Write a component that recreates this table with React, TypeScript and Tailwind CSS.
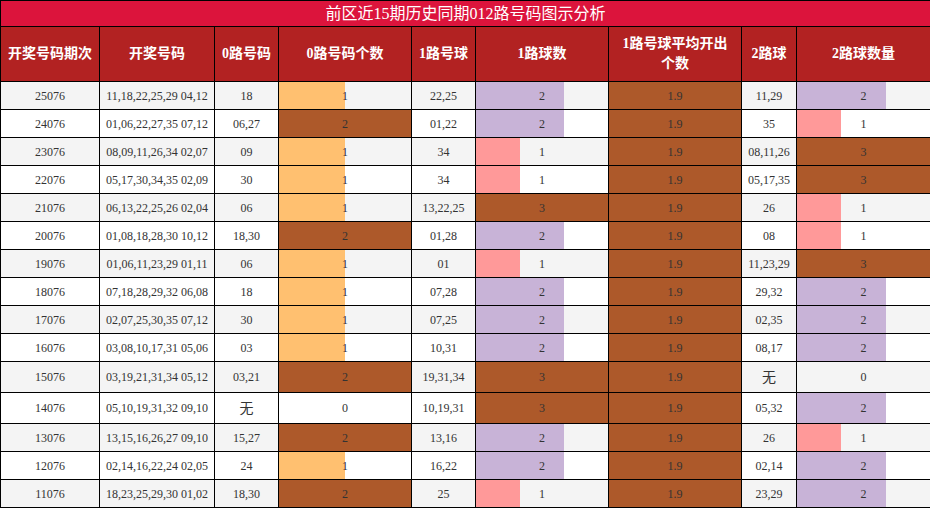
import React from 'react'

type Row = {
  issue: string
  numbers: string
  zero: string
  zeroCount: number
  one: string
  oneCount: number
  two: string
  twoCount: number
  tall?: boolean
}

const rows: Row[] = [
  { issue: '25076', numbers: '11,18,22,25,29 04,12', zero: '18', zeroCount: 1, one: '22,25', oneCount: 2, two: '11,29', twoCount: 2 },
  { issue: '24076', numbers: '01,06,22,27,35 07,12', zero: '06,27', zeroCount: 2, one: '01,22', oneCount: 2, two: '35', twoCount: 1 },
  { issue: '23076', numbers: '08,09,11,26,34 02,07', zero: '09', zeroCount: 1, one: '34', oneCount: 1, two: '08,11,26', twoCount: 3 },
  { issue: '22076', numbers: '05,17,30,34,35 02,09', zero: '30', zeroCount: 1, one: '34', oneCount: 1, two: '05,17,35', twoCount: 3 },
  { issue: '21076', numbers: '06,13,22,25,26 02,04', zero: '06', zeroCount: 1, one: '13,22,25', oneCount: 3, two: '26', twoCount: 1 },
  { issue: '20076', numbers: '01,08,18,28,30 10,12', zero: '18,30', zeroCount: 2, one: '01,28', oneCount: 2, two: '08', twoCount: 1 },
  { issue: '19076', numbers: '01,06,11,23,29 01,11', zero: '06', zeroCount: 1, one: '01', oneCount: 1, two: '11,23,29', twoCount: 3 },
  { issue: '18076', numbers: '07,18,28,29,32 06,08', zero: '18', zeroCount: 1, one: '07,28', oneCount: 2, two: '29,32', twoCount: 2 },
  { issue: '17076', numbers: '02,07,25,30,35 07,12', zero: '30', zeroCount: 1, one: '07,25', oneCount: 2, two: '02,35', twoCount: 2 },
  { issue: '16076', numbers: '03,08,10,17,31 05,06', zero: '03', zeroCount: 1, one: '10,31', oneCount: 2, two: '08,17', twoCount: 2 },
  { issue: '15076', numbers: '03,19,21,31,34 05,12', zero: '03,21', zeroCount: 2, one: '19,31,34', oneCount: 3, two: '无', twoCount: 0, tall: true },
  { issue: '14076', numbers: '05,10,19,31,32 09,10', zero: '无', zeroCount: 0, one: '10,19,31', oneCount: 3, two: '05,32', twoCount: 2, tall: true },
  { issue: '13076', numbers: '13,15,16,26,27 09,10', zero: '15,27', zeroCount: 2, one: '13,16', oneCount: 2, two: '26', twoCount: 1 },
  { issue: '12076', numbers: '02,14,16,22,24 02,05', zero: '24', zeroCount: 1, one: '16,22', oneCount: 2, two: '02,14', twoCount: 2 },
  { issue: '11076', numbers: '18,23,25,29,30 01,02', zero: '18,30', zeroCount: 2, one: '25', oneCount: 1, two: '23,29', twoCount: 2 },
]

const zeroColors: Record<number, string> = {
  0: 'bg-transparent',
  1: 'bg-[#ffc070]',
  2: 'bg-[#ad592a]',
}

const triColors: Record<number, string> = {
  0: 'bg-transparent',
  1: 'bg-[#ff9999]',
  2: 'bg-[#c8b3d7]',
  3: 'bg-[#ad592a]',
}

const headers = [
  '开奖号码期次',
  '开奖号码',
  '0路号码',
  '0路号码个数',
  '1路号球',
  '1路球数',
  '1路号球平均开出个数',
  '2路球',
  '2路球数量',
]

const colWidths = ['w-[99px]', 'w-[115px]', 'w-[64px]', 'w-[133px]', 'w-[64px]', 'w-[133px]', 'w-[133px]', 'w-[55px]', 'w-[134px]']

function BarCell({ value, max, color }: { value: string | number; max: number; color: string }) {
  const n = typeof value === 'number' ? value : parseFloat(value)
  const pct = Math.min(100, (n / max) * 100)
  return (
    <td className="relative border border-black p-0 text-center">
      <div className={`absolute inset-y-0 left-0 ${color}`} style={{ width: `${pct}%` }} />
      <span className="relative">{value}</span>
    </td>
  )
}

export default function App() {
  return (
    <div className="w-[930px] bg-white font-['Liberation_Serif','Noto_Sans_CJK_SC',serif] text-[12px] text-[#333]">
      <table className="w-[930px] table-fixed border-collapse">
        <colgroup>
          {colWidths.map((w, i) => (
            <col key={i} className={w} />
          ))}
        </colgroup>
        <thead>
          <tr className="h-[26px]">
            <th colSpan={9} className="border border-black bg-[#dc143c] p-0 text-center text-[16px] font-normal text-white">
              前区近15期历史同期012路号码图示分析
            </th>
          </tr>
          <tr className="h-[55px]">
            {headers.map(h => (
              <th
                key={h}
                className="whitespace-nowrap border border-black bg-[#b22222] p-0 text-center text-[14px] font-bold leading-[20px] text-white"
              >
                {h === '1路号球平均开出个数' ? (
                  <>
                    1路号球平均开出
                    <br />
                    个数
                  </>
                ) : (
                  h
                )}
              </th>
            ))}
          </tr>
        </thead>
        <tbody>
          {rows.map((r, i) => (
            <tr key={r.issue} className={`${r.tall ? 'h-[31px]' : 'h-[28px]'} ${i % 2 === 0 ? 'bg-[#f4f4f4]' : 'bg-white'}`}>
              <td className="border border-black p-0 text-center">{r.issue}</td>
              <td className="border border-black p-0 text-center">{r.numbers}</td>
              <td className={`border border-black p-0 text-center ${r.zero === '无' ? 'text-[14px]' : ''}`}>{r.zero}</td>
              <BarCell value={r.zeroCount} max={2} color={zeroColors[r.zeroCount]} />
              <td className="border border-black p-0 text-center">{r.one}</td>
              <BarCell value={r.oneCount} max={3} color={triColors[r.oneCount]} />
              <BarCell value="1.9" max={1.9} color="bg-[#ad592a]" />
              <td className={`border border-black p-0 text-center ${r.two === '无' ? 'text-[14px]' : ''}`}>{r.two}</td>
              <BarCell value={r.twoCount} max={3} color={triColors[r.twoCount]} />
            </tr>
          ))}
        </tbody>
      </table>
    </div>
  )
}
